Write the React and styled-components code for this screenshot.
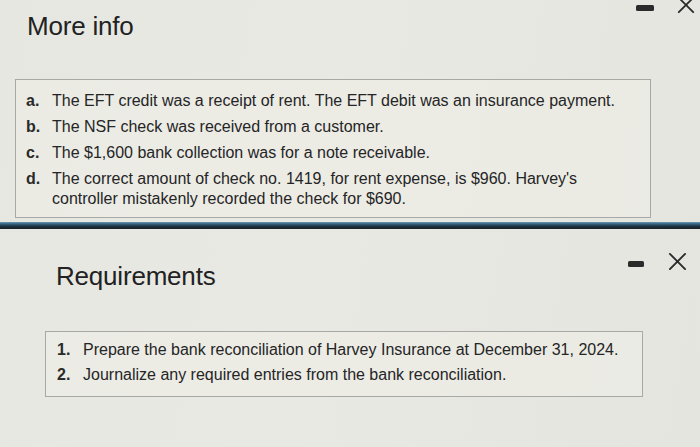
import React from "react";
import styled, { createGlobalStyle } from "styled-components";

const Global = createGlobalStyle`
  html, body { margin: 0; padding: 0; }
  body {
    width: 700px;
    height: 447px;
    overflow: hidden;
    background: #e5e5df;
    font-family: "Liberation Sans", Arial, sans-serif;
    color: #262626;
  }
`;

const Page = styled.div`
  width: 700px;
  height: 447px;
  display: flex;
  flex-direction: column;
  background: linear-gradient(100deg, #e6e7e1 0%, #e9e9e3 45%, #e4e5df 100%);
`;

const Panel = styled.section`
  display: flex;
  flex-direction: column;
  height: ${(p) => p.$height}px;
  box-sizing: border-box;
`;

const Header = styled.div`
  display: flex;
  justify-content: space-between;
  align-items: flex-start;
  padding-left: ${(p) => p.$left}px;
  padding-right: ${(p) => p.$right}px;
`;

const Title = styled.h2`
  margin: ${(p) => p.$top}px 0 0 0;
  font-size: 26px;
  line-height: 30px;
  font-weight: 400;
  color: #222;
  letter-spacing: -0.2px;
`;

const Controls = styled.div`
  display: flex;
  align-items: center;
  gap: ${(p) => p.$gap}px;
  margin-top: ${(p) => p.$top}px;
`;

const Minimize = styled.span`
  display: block;
  width: ${(p) => p.$w}px;
  height: 6px;
  border-radius: 1.5px;
  background: #2b2b2b;
  margin-top: 5px;
`;

const CloseIcon = ({ size }) => (
  <svg width={size} height={size} viewBox="0 0 20 20" aria-hidden="true">
    <path d="M2 2 L18 18 M18 2 L2 18" stroke="#2b2b2b" strokeWidth="2" strokeLinecap="round" />
  </svg>
);

const Box = styled.div`
  margin: ${(p) => p.$top}px 0 0 ${(p) => p.$left}px;
  width: ${(p) => p.$width}px;
  box-sizing: border-box;
  border: 1px solid #a8a9a4;
  background: rgba(238, 238, 232, 0.55);
  padding: ${(p) => p.$pt}px 10px ${(p) => p.$pb}px ${(p) => p.$pl}px;
  display: flex;
  flex-direction: column;
  gap: ${(p) => p.$gap}px;
`;

const Item = styled.div`
  display: grid;
  grid-template-columns: 26px 1fr;
  font-size: 16px;
  line-height: 20px;
  color: #252525;
`;

const Label = styled.span`
  font-weight: 700;
  color: #2a2a2a;
`;

const Divider = styled.div`
  height: 7px;
  flex: none;
  background: linear-gradient(180deg, #6f9ab5 0%, #34627f 28%, #1d2e3b 65%, #18222b 100%);
`;

const info = [
  ["a.", "The EFT credit was a receipt of rent. The EFT debit was an insurance payment."],
  ["b.", "The NSF check was received from a customer."],
  ["c.", "The $1,600 bank collection was for a note receivable."],
  [
    "d.",
    "The correct amount of check no. 1419, for rent expense, is $960. Harvey's controller mistakenly recorded the check for $690.",
  ],
];

const reqs = [
  ["1.", "Prepare the bank reconciliation of Harvey Insurance at December 31, 2024."],
  ["2.", "Journalize any required entries from the bank reconciliation."],
];

export default function App() {
  return (
    <>
      <Global />
      <Page>
        <Panel $height={222}>
          <Header $left={27} $right={5}>
            <Title $top={11}>More info</Title>
            <Controls $gap={23} $top={-4}>
              <Minimize $w={18} />
              <CloseIcon size={18} />
            </Controls>
          </Header>
          <Box $top={38} $left={15} $width={636} $pt={11} $pb={8} $pl={10} $gap={6}>
            {info.map(([l, t]) => (
              <Item key={l}>
                <Label>{l}</Label>
                <span>{t}</span>
              </Item>
            ))}
          </Box>
        </Panel>
        <Divider />
        <Panel $height={218}>
          <Header $left={56} $right={13}>
            <Title $top={32}>Requirements</Title>
            <Controls $gap={24} $top={23}>
              <Minimize $w={16} />
              <CloseIcon size={19} />
            </Controls>
          </Header>
          <Box $top={40} $left={45} $width={598} $pt={8} $pb={11} $pl={11} $gap={5}>
            {reqs.map(([l, t]) => (
              <Item key={l}>
                <Label>{l}</Label>
                <span>{t}</span>
              </Item>
            ))}
          </Box>
        </Panel>
      </Page>
    </>
  );
}
